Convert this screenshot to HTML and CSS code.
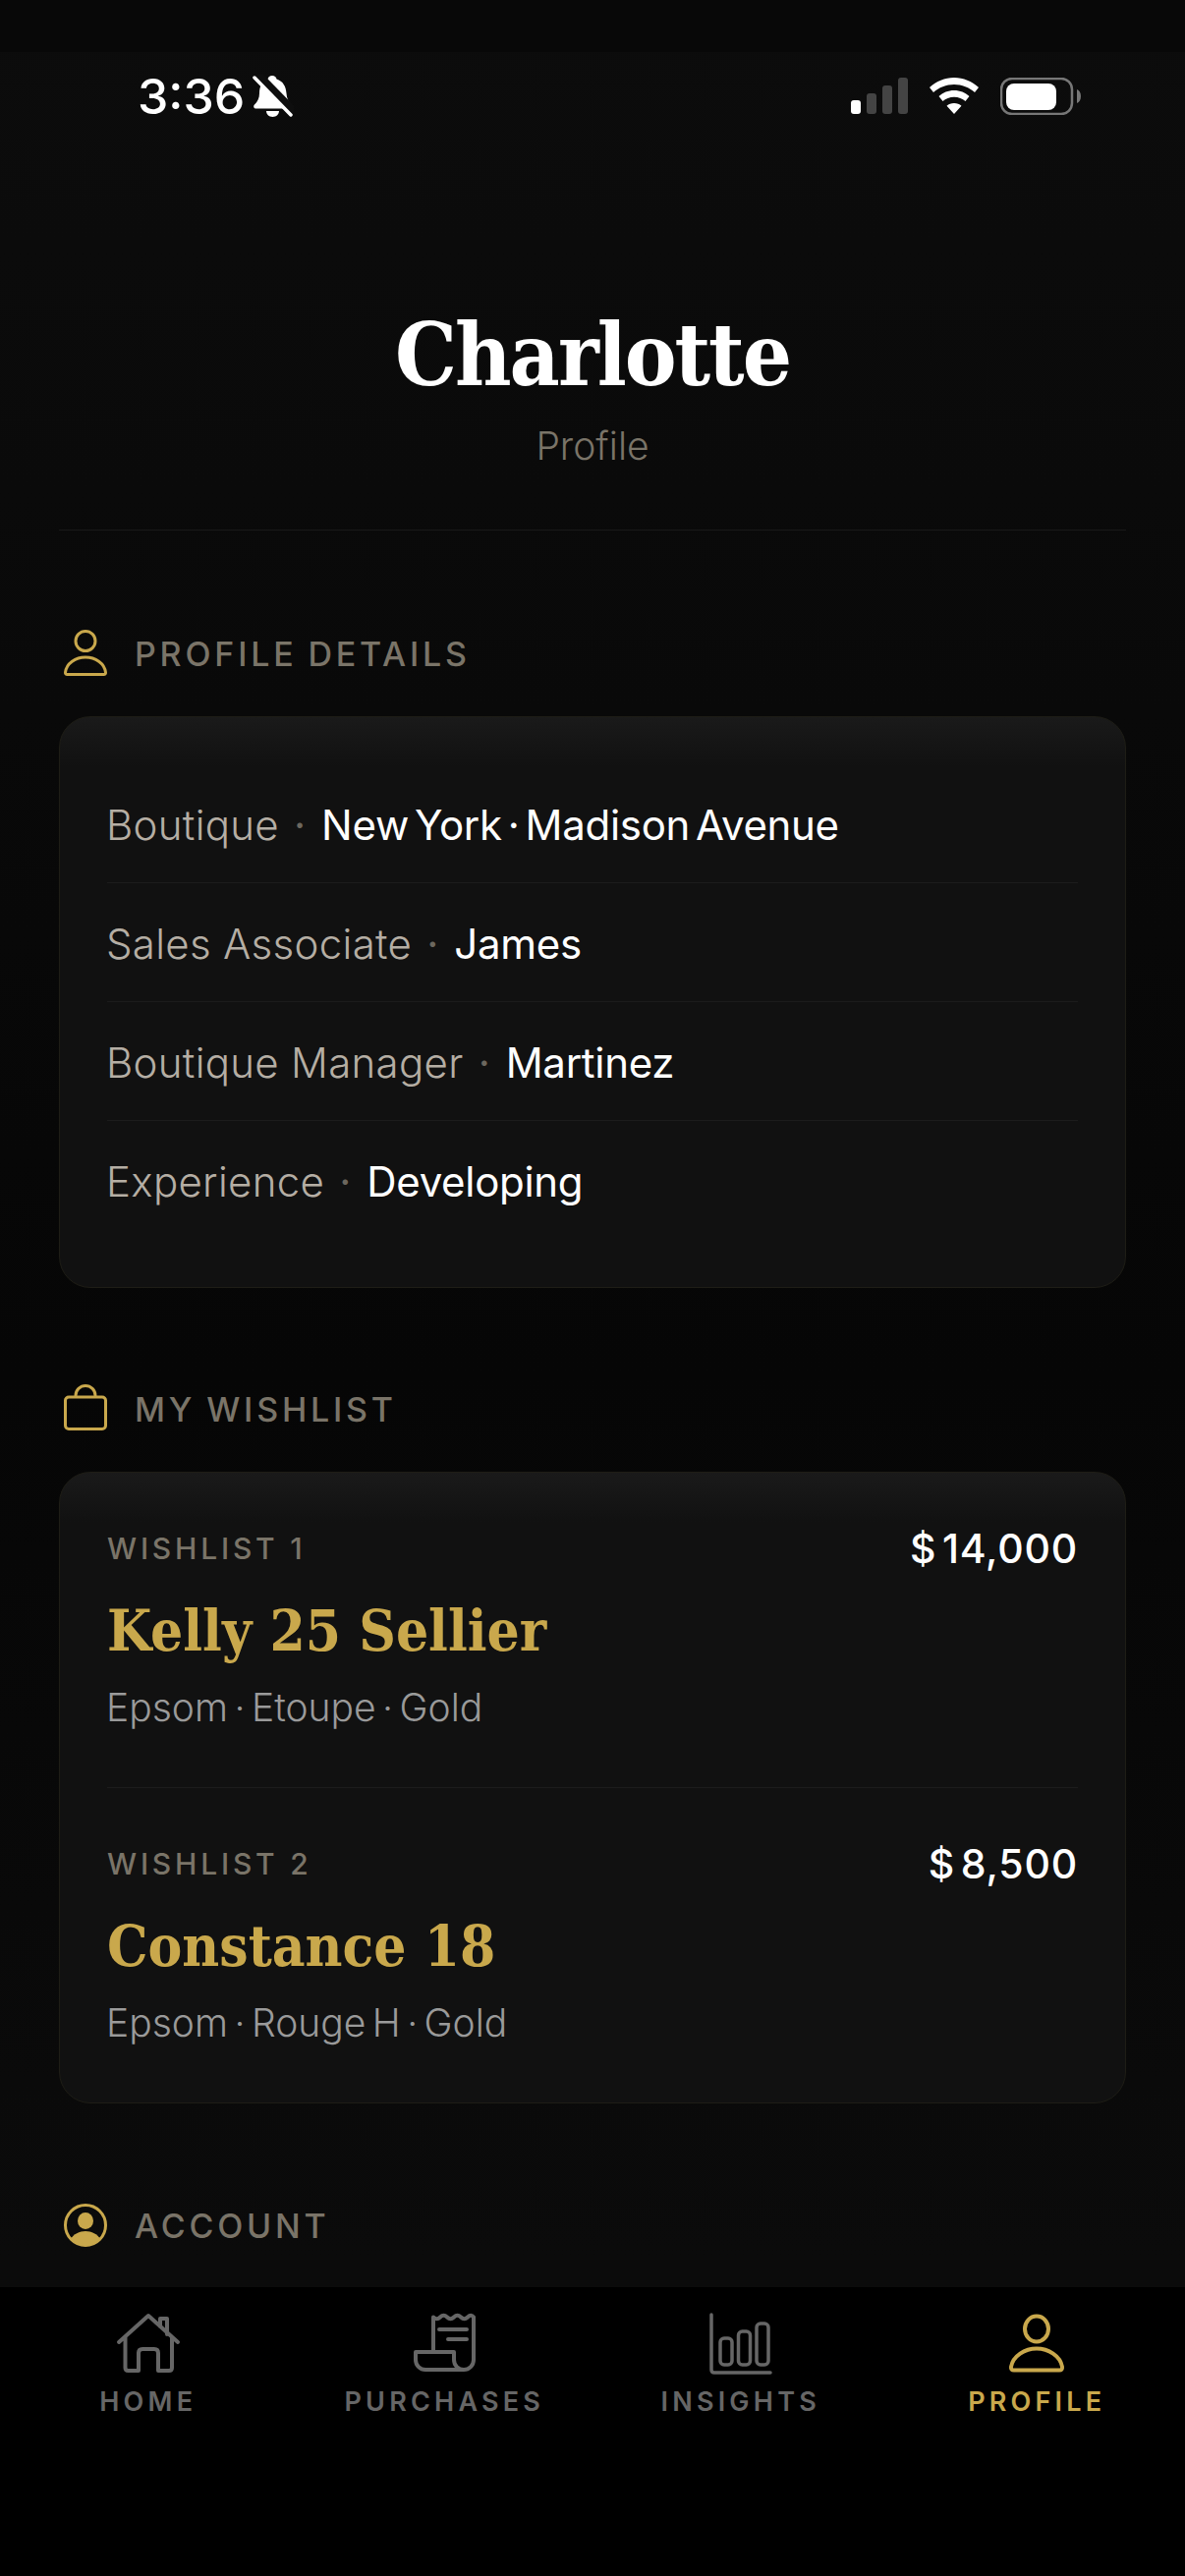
FILE: index.html
```html
<!DOCTYPE html>
<html lang="en">
<head>
<meta charset="utf-8">
<title>Profile</title>
<link rel="stylesheet" href="styles.css">
</head>
<body>
<div class="phone">
  <div class="top-band"></div>
  <div class="page">
    <div class="status">
      <div class="status-left">
        <span class="time">3:36</span>
        <svg class="bell" viewBox="0 0 42 44" width="42" height="44"><path fill="#fff" d="M20 1c2.500 0 4 1.500 4.500 3.500C31 6.500 34 12 34.500 19c.3 5 2 8.500 5 11.500 1.500 1.500.8 4-1.500 4H3.500c-2.300 0-3-2.500-1.500-4C5 27.500 7 24 7 19c0-7 3-12.500 8.500-14.500C16 2.500 17.500 1 20 1zM14 37h13c0 3-2.700 6-6.500 6S14 40 14 37z"/><path stroke="#0e0e0e" stroke-width="9" d="M5 0l37 38"/><path stroke="#fff" stroke-width="3.500" stroke-linecap="round" d="M2 3l37 38"/></svg>
      </div>
      <div class="status-right">
        <svg viewBox="0 0 58 38" width="58" height="38"><rect x="0" y="23" width="10" height="14" rx="3" fill="#fff"/><rect x="16" y="16" width="10" height="21" rx="3" fill="#444"/><rect x="32" y="8" width="10" height="29" rx="3" fill="#444"/><rect x="48" y="0" width="10" height="37" rx="3" fill="#444"/></svg>
        <svg viewBox="0 0 50 38" width="50" height="38"><path fill="#fff" d="M25 0c9.500 0 18 3.700 25 10l-4 5C40.500 10 33 7 25 7S9.500 10 4 15L0 10C7 3.700 15.500 0 25 0zM25 13c6 0 11.500 2.300 15.500 6l-4 5c-3-2.700-7-4.300-11.500-4.300S16.500 21.300 13.500 24l-4-5C13.500 15.300 19 13 25 13zM25 26c3 0 5.500 1 7.500 2.800L25 37l-7.500-8.200C19.500 27 22 26 25 26z"/></svg>
        <svg viewBox="0 0 82 38" width="82" height="38"><rect x="1" y="1" width="72" height="36" rx="11" fill="none" stroke="#777" stroke-width="2.500"/><rect x="6" y="6" width="51" height="27" rx="8" fill="#fff"/><path d="M78 12c2.500 1 4 3.500 4 7s-1.500 6-4 7z" fill="#777"/></svg>
      </div>
    </div>

    <header class="head">
      <h1 class="name">Charlotte</h1>
      <p class="role">Profile</p>
    </header>

    <section class="section">
      <div class="sec-head">
        <svg class="sec-icon" viewBox="0 0 54 54"><circle cx="27" cy="14.500" r="10" class="gold-line"/><path class="gold-line" d="M6.500 46.500C7.500 37 17 31 27 31s19.500 6 20.500 15.500q.2 2-2 2H8.500q-2.200 0-2-2z"/></svg>
        <h2 class="sec-title">PROFILE DETAILS</h2>
      </div>
      <div class="card">
        <div class="row"><span class="label">Boutique</span><span class="sep">·</span><span class="value">New York · Madison Avenue</span></div>
        <div class="row"><span class="label">Sales Associate</span><span class="sep">·</span><span class="value">James</span></div>
        <div class="row"><span class="label">Boutique Manager</span><span class="sep">·</span><span class="value">Martinez</span></div>
        <div class="row"><span class="label">Experience</span><span class="sep">·</span><span class="value">Developing</span></div>
      </div>
    </section>

    <section class="section section-tight">
      <div class="sec-head">
        <svg class="sec-icon" viewBox="0 0 54 54"><rect x="6.500" y="15" width="41" height="32.500" rx="3.500" class="gold-line"/><path class="gold-line" d="M17 15v-1.500a10 10 0 0 1 20 0V15"/></svg>
        <h2 class="sec-title">MY WISHLIST</h2>
      </div>
      <div class="card">
        <div class="wish">
          <div class="wish-top"><span class="wish-tag">WISHLIST 1</span><span class="price">$ 14,000</span></div>
          <div class="wish-name">Kelly 25 Sellier</div>
          <div class="wish-sub">Epsom · Etoupe · Gold</div>
        </div>
        <div class="wish">
          <div class="wish-top"><span class="wish-tag">WISHLIST 2</span><span class="price">$ 8,500</span></div>
          <div class="wish-name">Constance 18</div>
          <div class="wish-sub">Epsom · Rouge H · Gold</div>
        </div>
      </div>
    </section>

    <section class="section section-last">
      <div class="sec-head">
        <svg class="sec-icon" viewBox="0 0 54 54"><circle cx="27" cy="27" r="20.500" class="gold-line"/><ellipse cx="27" cy="22.500" rx="8" ry="8.500" class="gold-fill"/><path class="gold-fill" d="M12 41c2.500-5 9-8 15-8s12.500 3 15 8a20 20 0 0 1-30 0z"/></svg>
        <h2 class="sec-title">ACCOUNT</h2>
      </div>
    </section>
  </div>

  <nav class="tabbar">
    <div class="tab">
      <svg class="tab-icon" viewBox="0 -1 72 66"><path d="M6 31L36 4l30 27M12.500 26v31q0 3 3 3H26V42q0-4 4-4h12q4 0 4 4v18h11q3 0 3-3V26M48 15V7h7v16"/></svg>
      <span class="tab-label">HOME</span>
    </div>
    <div class="tab">
      <svg class="tab-icon" viewBox="0 -1 72 66"><path d="M25 41V5.500q3.500 3.500 7 0t7 0 7 0 7 0 7 0 6 0V49a10 10 0 0 1-10 10H17A10 10 0 0 1 7 49v-8h39v8a10 10 0 0 0 10 10M31 18h28M40 28h19"/></svg>
      <span class="tab-label">PURCHASES</span>
    </div>
    <div class="tab">
      <svg class="tab-icon thin" viewBox="0 0 72 66"><path d="M6 4v56q0 3 3 3h57"/><rect x="15" y="28" width="12" height="27" rx="4"/><rect x="33.500" y="21" width="12" height="34" rx="4"/><rect x="52" y="13" width="12" height="42" rx="4"/></svg>
      <span class="tab-label">INSIGHTS</span>
    </div>
    <div class="tab active">
      <svg class="tab-icon" viewBox="0 -1 72 66"><ellipse cx="36" cy="17.500" rx="12" ry="13"/><path d="M10 56c2-11 14-18.500 26-18.500S60 45 62 56q.5 3.500-3 3.500H13q-3.500 0-3-3.500z"/></svg>
      <span class="tab-label">PROFILE</span>
    </div>
  </nav>
</div>
</body>
</html>
```

FILE: styles.css
```css
* { box-sizing: border-box; }
html, body { margin: 0; padding: 0; background: #000; }
body { font-family: Inter, "Noto Sans", sans-serif; }

.phone {
  position: relative;
  width: 1206px;
  height: 2622px;
  overflow: hidden;
  background: linear-gradient(#0c0c0c 0, #0a0a0a 500px, #060606 1400px, #0b0b0b 2300px);
}
.top-band { height: 53px; background: #080808; }
.page { padding: 0 60px; }

.status { height: 90px; display: flex; justify-content: space-between; align-items: center; padding: 0 46px 0 80px; }
.status-left { display: flex; align-items: center; gap: 8px; }
.time { font-size: 50px; font-weight: 500; color: #fff; line-height: 60px; }
.bell { display: block; }
.status-right { display: flex; align-items: center; gap: 22px; }
.status-right svg { display: block; }

.head { height: 397px; border-bottom: 1px solid #191919; text-align: center; padding-top: 158px; }
.name { margin: 0; font-family: "DejaVu Serif", serif; font-stretch: condensed; font-weight: 700; font-size: 88px; line-height: 120px; color: #fff; letter-spacing: -2px; }
.role { margin: 8px 0 0; font-size: 39px; font-weight: 300; line-height: 50px; color: #7a7468; }

.section { margin-top: 98px; }
.section-tight { margin-top: 96px; }
.section-last { margin-top: 97px; }
.sec-head { display: flex; align-items: center; gap: 23px; height: 54px; margin-bottom: 37px; }
.sec-icon { width: 54px; height: 54px; display: block; flex: none; }
.gold-line { fill: none; stroke: #c9a84c; stroke-width: 3; }
.gold-fill { fill: #c9a84c; }
.sec-title { margin: 0; font-size: 34px; font-weight: 500; letter-spacing: 3.800px; word-spacing: -2px; color: #7a7468; }

.card {
  border: 1px solid #1e1d16;
  border-radius: 32px;
  padding: 0 48px;
  background: linear-gradient(#1a1a1a 0, #111 50px, #111 100%);
}
.row { display: flex; align-items: center; height: 121px; padding-top: 2px; font-size: 42px; border-bottom: 1px solid #1c1c1c; }
.row:first-child { margin-top: 48px; }
.row:last-child { margin-bottom: 48px; border-bottom: 0; }
.label { color: #b5aea4; font-weight: 300; letter-spacing: .3px; margin-left: -1px; }
.sep { color: #6c675e; margin: 0 16px 0 15px; }
.value { color: #fff; font-weight: 400; word-spacing: -5.500px; letter-spacing: -.3px; }

.wish { height: 321px; padding-top: 52px; border-bottom: 1px solid #1c1c1c; }
.wish:last-child { border-bottom: 0; height: 320px; }
.wish-top { display: flex; justify-content: space-between; align-items: center; height: 50px; }
.wish-tag { font-size: 30px; font-weight: 500; letter-spacing: 3.800px; color: #7a7468; }
.price { font-size: 41px; font-weight: 500; color: #fff; letter-spacing: .8px; word-spacing: -6px; }
.wish-name { margin-top: 17px; font-family: "DejaVu Serif", serif; font-stretch: condensed; font-weight: 700; font-size: 58px; line-height: 84px; color: #c9a84c; }
.wish-sub { margin-top: 11px; font-size: 39px; font-weight: 300; line-height: 50px; color: #9a9a9a; word-spacing: -4.500px; margin-left: -1px; }

.tabbar {
  position: absolute;
  left: 0;
  right: 0;
  top: 2328px;
  bottom: 0;
  background: #000;
  display: grid;
  grid-template-columns: repeat(4, 1fr);
  padding-top: 24px;
}
.tab { display: flex; flex-direction: column; align-items: center; color: #666; }
.tab-icon { width: 72px; height: 66px; display: block; fill: none; stroke: #666; stroke-width: 4; stroke-linecap: round; stroke-linejoin: round; }
.tab-icon.thin { stroke-width: 3.500; }
.tab-label { margin-top: 9px; font-size: 27px; font-weight: 600; letter-spacing: 4.200px; line-height: 36px; }
.tab.active { color: #c9a84c; }
.tab.active .tab-icon { stroke: #c9a84c; }
```
